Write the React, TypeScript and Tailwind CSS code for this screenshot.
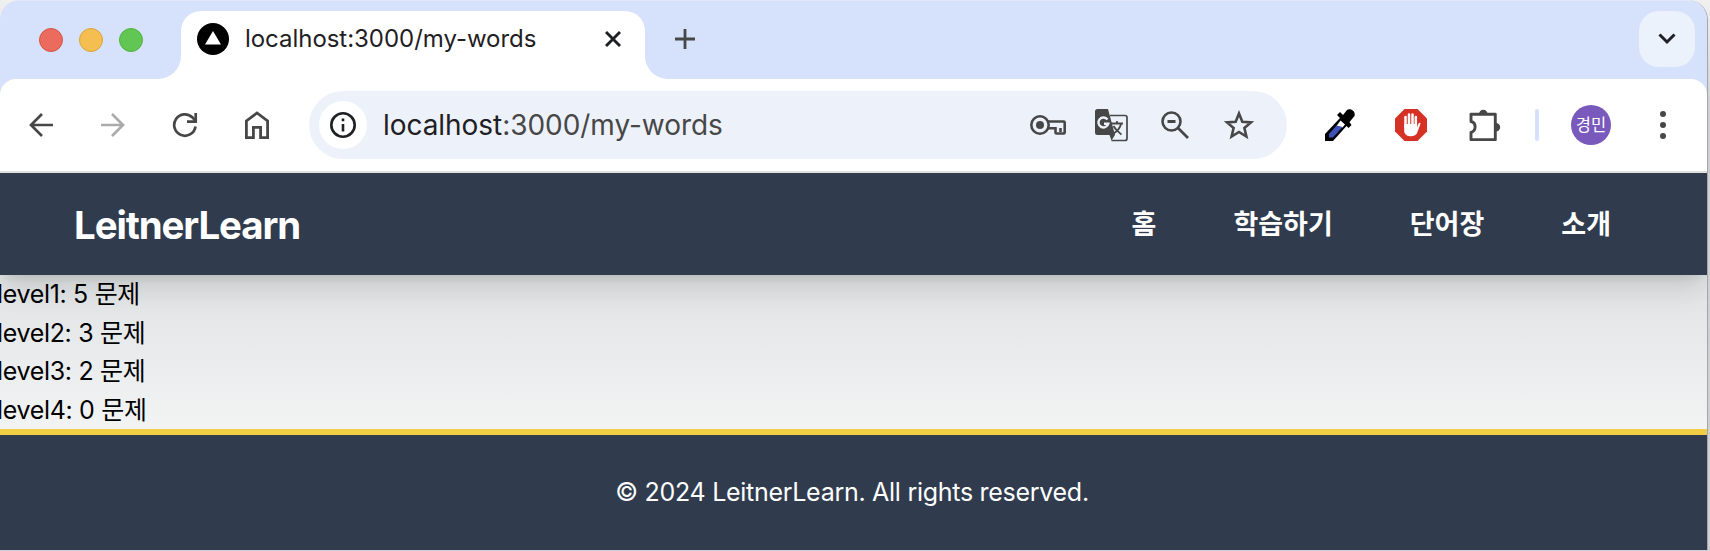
import type { ReactNode } from 'react';

const sans = "font-['Inter','Noto_Sans_CJK_KR',sans-serif]";

function Icon({ w, h, className = '', children }: { w: number; h: number; className?: string; children: ReactNode }) {
  return (
    <svg width={w} height={h} viewBox={`0 0 ${w} ${h}`} className={`shrink-0 ${className}`} fill="none">
      {children}
    </svg>
  );
}

function TabStrip() {
  return (
    <div className="flex h-[79px] items-start border-t border-[#e3e9f8] bg-[#d6e1fc]">
      <div className="flex gap-4 pt-[27px] pl-[39px]">
        <span className="size-6 rounded-full border border-[#d65448] bg-[#ec6b5f]" />
        <span className="size-6 rounded-full border border-[#dba33d] bg-[#f4bf50]" />
        <span className="size-6 rounded-full border border-[#54b13f] bg-[#62c655]" />
      </div>
      <div className="ml-[14px] flex h-[78px] items-end">
        <Icon w={24} h={24}><path d="M24 0v24H0C14 24 24 14 24 0Z" fill="#fff" /></Icon>
        <div className="flex h-[68px] w-[464px] items-center rounded-t-[20px] bg-white pr-6 pb-[12px] pl-4">
          <Icon w={32} h={32}>
            <circle cx="16" cy="16" r="16" fill="#000" />
            <path d="M16 8l8 13.500H8Z" fill="#fff" />
          </Icon>
          <span className="ml-4 whitespace-nowrap text-[24px] tracking-[-0.04px] text-[#1f2023]">localhost:3000/my-words</span>
          <Icon w={16} h={16} className="ml-auto">
            <path d="M1 1l14 14M15 1L1 15" stroke="#1f2023" strokeWidth="2.900" />
          </Icon>
        </div>
        <Icon w={24} h={24}><path d="M0 0v24h24C10 24 0 14 0 0Z" fill="#fff" /></Icon>
      </div>
      <Icon w={20} h={20} className="mt-7 ml-[6px]">
        <path d="M10 0v20M0 10h20" stroke="#474747" strokeWidth="2.800" />
      </Icon>
      <div className="mt-[10px] mr-3 ml-auto flex size-14 items-center justify-center rounded-[20px] bg-[#ebf2fc]">
        <Icon w={18} h={12}><path d="M1.500 1.500L9 9l7.500-7.500" stroke="#1f2023" strokeWidth="3" /></Icon>
      </div>
    </div>
  );
}

function Toolbar() {
  return (
    <div className="bg-[#d6e1fc]">
      <div className="flex h-[94px] items-center rounded-tr-[16px] rounded-tl-[16px] border-b-2 border-[#dfe1df] bg-white">
        <Icon w={24} h={24} className="ml-[29px]">
          <path d="M24 12H2M13 1L2 12l11 11" stroke="#474747" strokeWidth="2.700" />
        </Icon>
        <Icon w={24} h={24} className="ml-12">
          <path d="M0 12h22M11 1l11 11-11 11" stroke="#ababab" strokeWidth="2.700" />
        </Icon>
        <Icon w={26} h={26} className="ml-[47px]">
          <path d="M23.500 14.500A10.700 10.700 0 1 1 20.500 5.500L23 8.500" stroke="#474747" strokeWidth="2.700" />
          <path d="M23.700 1v8.700H15" stroke="#474747" strokeWidth="2.700" />
        </Icon>
        <Icon w={24} h={28} className="ml-[47px]">
          <path d="M1.400 26.600V10L12 2l10.600 8v16.600h-7V16.400H8.400v10.200Z" stroke="#474747" strokeWidth="2.800" />
        </Icon>
        <div className="ml-10 flex h-[68px] w-[978px] items-center rounded-full bg-[#edf2fa]">
          <span className="ml-[10px] flex size-12 items-center justify-center rounded-full bg-white">
            <Icon w={26} h={26}>
              <circle cx="13" cy="13" r="11.700" stroke="#1f2023" strokeWidth="2.600" />
              <path d="M13 12v7.500M13 6.500v2.800" stroke="#1f2023" strokeWidth="2.600" />
            </Icon>
          </span>
          <span className="ml-4 whitespace-nowrap text-[28px] tracking-[-0.05px] text-[#474747]">
            <span className="text-[#1f2023]">localhost</span>:3000/my-words
          </span>
          <div className="mr-[32px] ml-auto flex items-center">
            <Icon w={36} h={22}>
              <circle cx="10" cy="11" r="8.700" stroke="#474747" strokeWidth="2.600" />
              <circle cx="10" cy="11" r="4" fill="#474747" />
              <path d="M18 7.500h15.700a1 1 0 0 1 1 1v10a1 1 0 0 1-1 1H26.500a1 1 0 0 1-1-1v-4.300H18M30.500 14v4" stroke="#474747" strokeWidth="2.600" />
            </Icon>
            <Icon w={34} h={34} className="ml-[29px]">
              <path d="M15 7.500h15a2 2 0 0 1 2 2V30.500a2 2 0 0 1-2 2H16.500" stroke="#474747" strokeWidth="1.700" />
              <path d="M2.500 1h10.500l7 26-3.500 5.500L14.500 27H2.500A2.500 2.500 0 0 1 0 24.500v-21A2.500 2.500 0 0 1 2.500 1Z" fill="#474747" />
              <path d="M12.500 11.500a5 5 0 1 0 .8 4.200H9" stroke="#edf2fa" strokeWidth="2.400" />
              <path d="M16 15.500h12M22 13v3M26 16c-1 5-5 8-8 10M18.500 18c2 4 5 6 8 8.500" stroke="#474747" strokeWidth="1.800" />
            </Icon>
            <Icon w={28} h={28} className="ml-[32px]">
              <circle cx="10.500" cy="10.500" r="9" stroke="#474747" strokeWidth="2.600" />
              <path d="M6.500 10.500h8M17 17l10 10" stroke="#474747" strokeWidth="2.800" />
            </Icon>
            <Icon w={32} h={30} className="ml-[34px]">
              <path d="M16 3.500l3.300 8.200 8.700.7-6.600 5.600 2 8.500L16 22l-7.400 4.500 2-8.500L4 12.400l8.700-.7Z" stroke="#474747" strokeWidth="2.600" />
            </Icon>
          </div>
        </div>
        <Icon w={30} h={32} className="ml-[38px]">
          <path d="M0 32v-7L15 9l-3-3 3-3 3 3 4-5c3-2 9 1 7.500 6l-5 6 2 3-3 3-2-2L8 32Z" fill="#000" />
          <path d="M15.500 11.500l4.500 4-2.500 3-6-1.500Z" fill="#fff" />
          <path d="M11.500 16.500l6 1.500L8 28.500H4V25Z" fill="#3d52b8" />
        </Icon>
        <Icon w={32} h={32} className="ml-10">
          <path d="M9.500 0h13L32 9.500v13L22.500 32h-13L0 22.500v-13Z" fill="#d53125" />
          <path d="M10.500 8V18M14 5.500V17M17.500 5.500v11M20.800 8v10" stroke="#fff" strokeWidth="2.500" strokeLinecap="round" />
          <path d="M9.200 15h12.900v3.500l1.400-4c1-1.500 2.400-.8 1.900.5l-2.900 8c-1.400 5.800-12.100 6-13.300-.5Z" fill="#fff" />
        </Icon>
        <Icon w={32} h={32} className="ml-[42px]">
          <path d="M2 5.300H26.300V30.700H2V23.500C7.500 22 7.500 13.500 2 12.500Z" stroke="#474747" strokeWidth="2.900" strokeLinejoin="round" />
          <path d="M10 5a4.300 4.300 0 0 1 8.600 0ZM27 14a4.200 4.200 0 0 1 0 8.400Z" fill="#474747" />
        </Icon>
        <span className="ml-[34px] h-8 w-1 rounded-full bg-[#d6e1fc]" />
        <span className="ml-8 flex size-10 items-center justify-center rounded-full bg-[#7a59bd] text-[16.500px] text-white">경민</span>
        <Icon w={6} h={28} className="ml-[49px]">
          <circle cx="3" cy="3" r="3" fill="#474747" /><circle cx="3" cy="14" r="3" fill="#474747" /><circle cx="3" cy="25" r="3" fill="#474747" />
        </Icon>
      </div>
    </div>
  );
}

const levels = [
  { name: 'level1', count: 5 },
  { name: 'level2', count: 3 },
  { name: 'level3', count: 2 },
  { name: 'level4', count: 0 },
];

function Page() {
  return (
    <div>
      <header className="relative z-10 flex h-[102px] items-center justify-between bg-[#303c4e] pr-[96px] pl-[74px] text-white shadow-[0_20px_25px_-5px_rgba(0,0,0,0.1),0_8px_10px_-6px_rgba(0,0,0,0.1)]">
        <h1 className="pt-1 text-[38.400px] font-bold tracking-[-1.08px]">LeitnerLearn</h1>
        <nav className="flex gap-[77px] pt-0.5 text-[27px] font-bold">
          <a>홈</a><a>학습하기</a><a>단어장</a><a>소개</a>
        </nav>
      </header>
      <main className="h-[154px] overflow-hidden bg-linear-to-b from-[#e0e3e4] to-[#f2f4f4] text-[25px] leading-[38.500px] tracking-[-0.33px] text-black">
        {levels.map((l) => (
          <p key={l.name} className="-ml-[3px] whitespace-nowrap">{l.name}: {l.count} 문제</p>
        ))}
      </main>
      <footer className="flex h-[121px] items-center justify-center border-t-[6px] border-[#f2cd46] bg-[#303c4e] pr-[3px] text-[25px] tracking-[-0.28px] text-white">
        <span>© 2024 LeitnerLearn. All rights reserved.</span>
      </footer>
    </div>
  );
}

export default function App() {
  return (
    <div className={`${sans} h-[551px] overflow-hidden bg-linear-to-b from-[#f0f0f0] to-[#d0d0d2] to-20%`}>
      <div className="h-[550px] w-[1708px] overflow-hidden rounded-t-[20px] border-r border-[#a5a6aa]">
        <TabStrip />
        <Toolbar />
        <Page />
      </div>
    </div>
  );
}
